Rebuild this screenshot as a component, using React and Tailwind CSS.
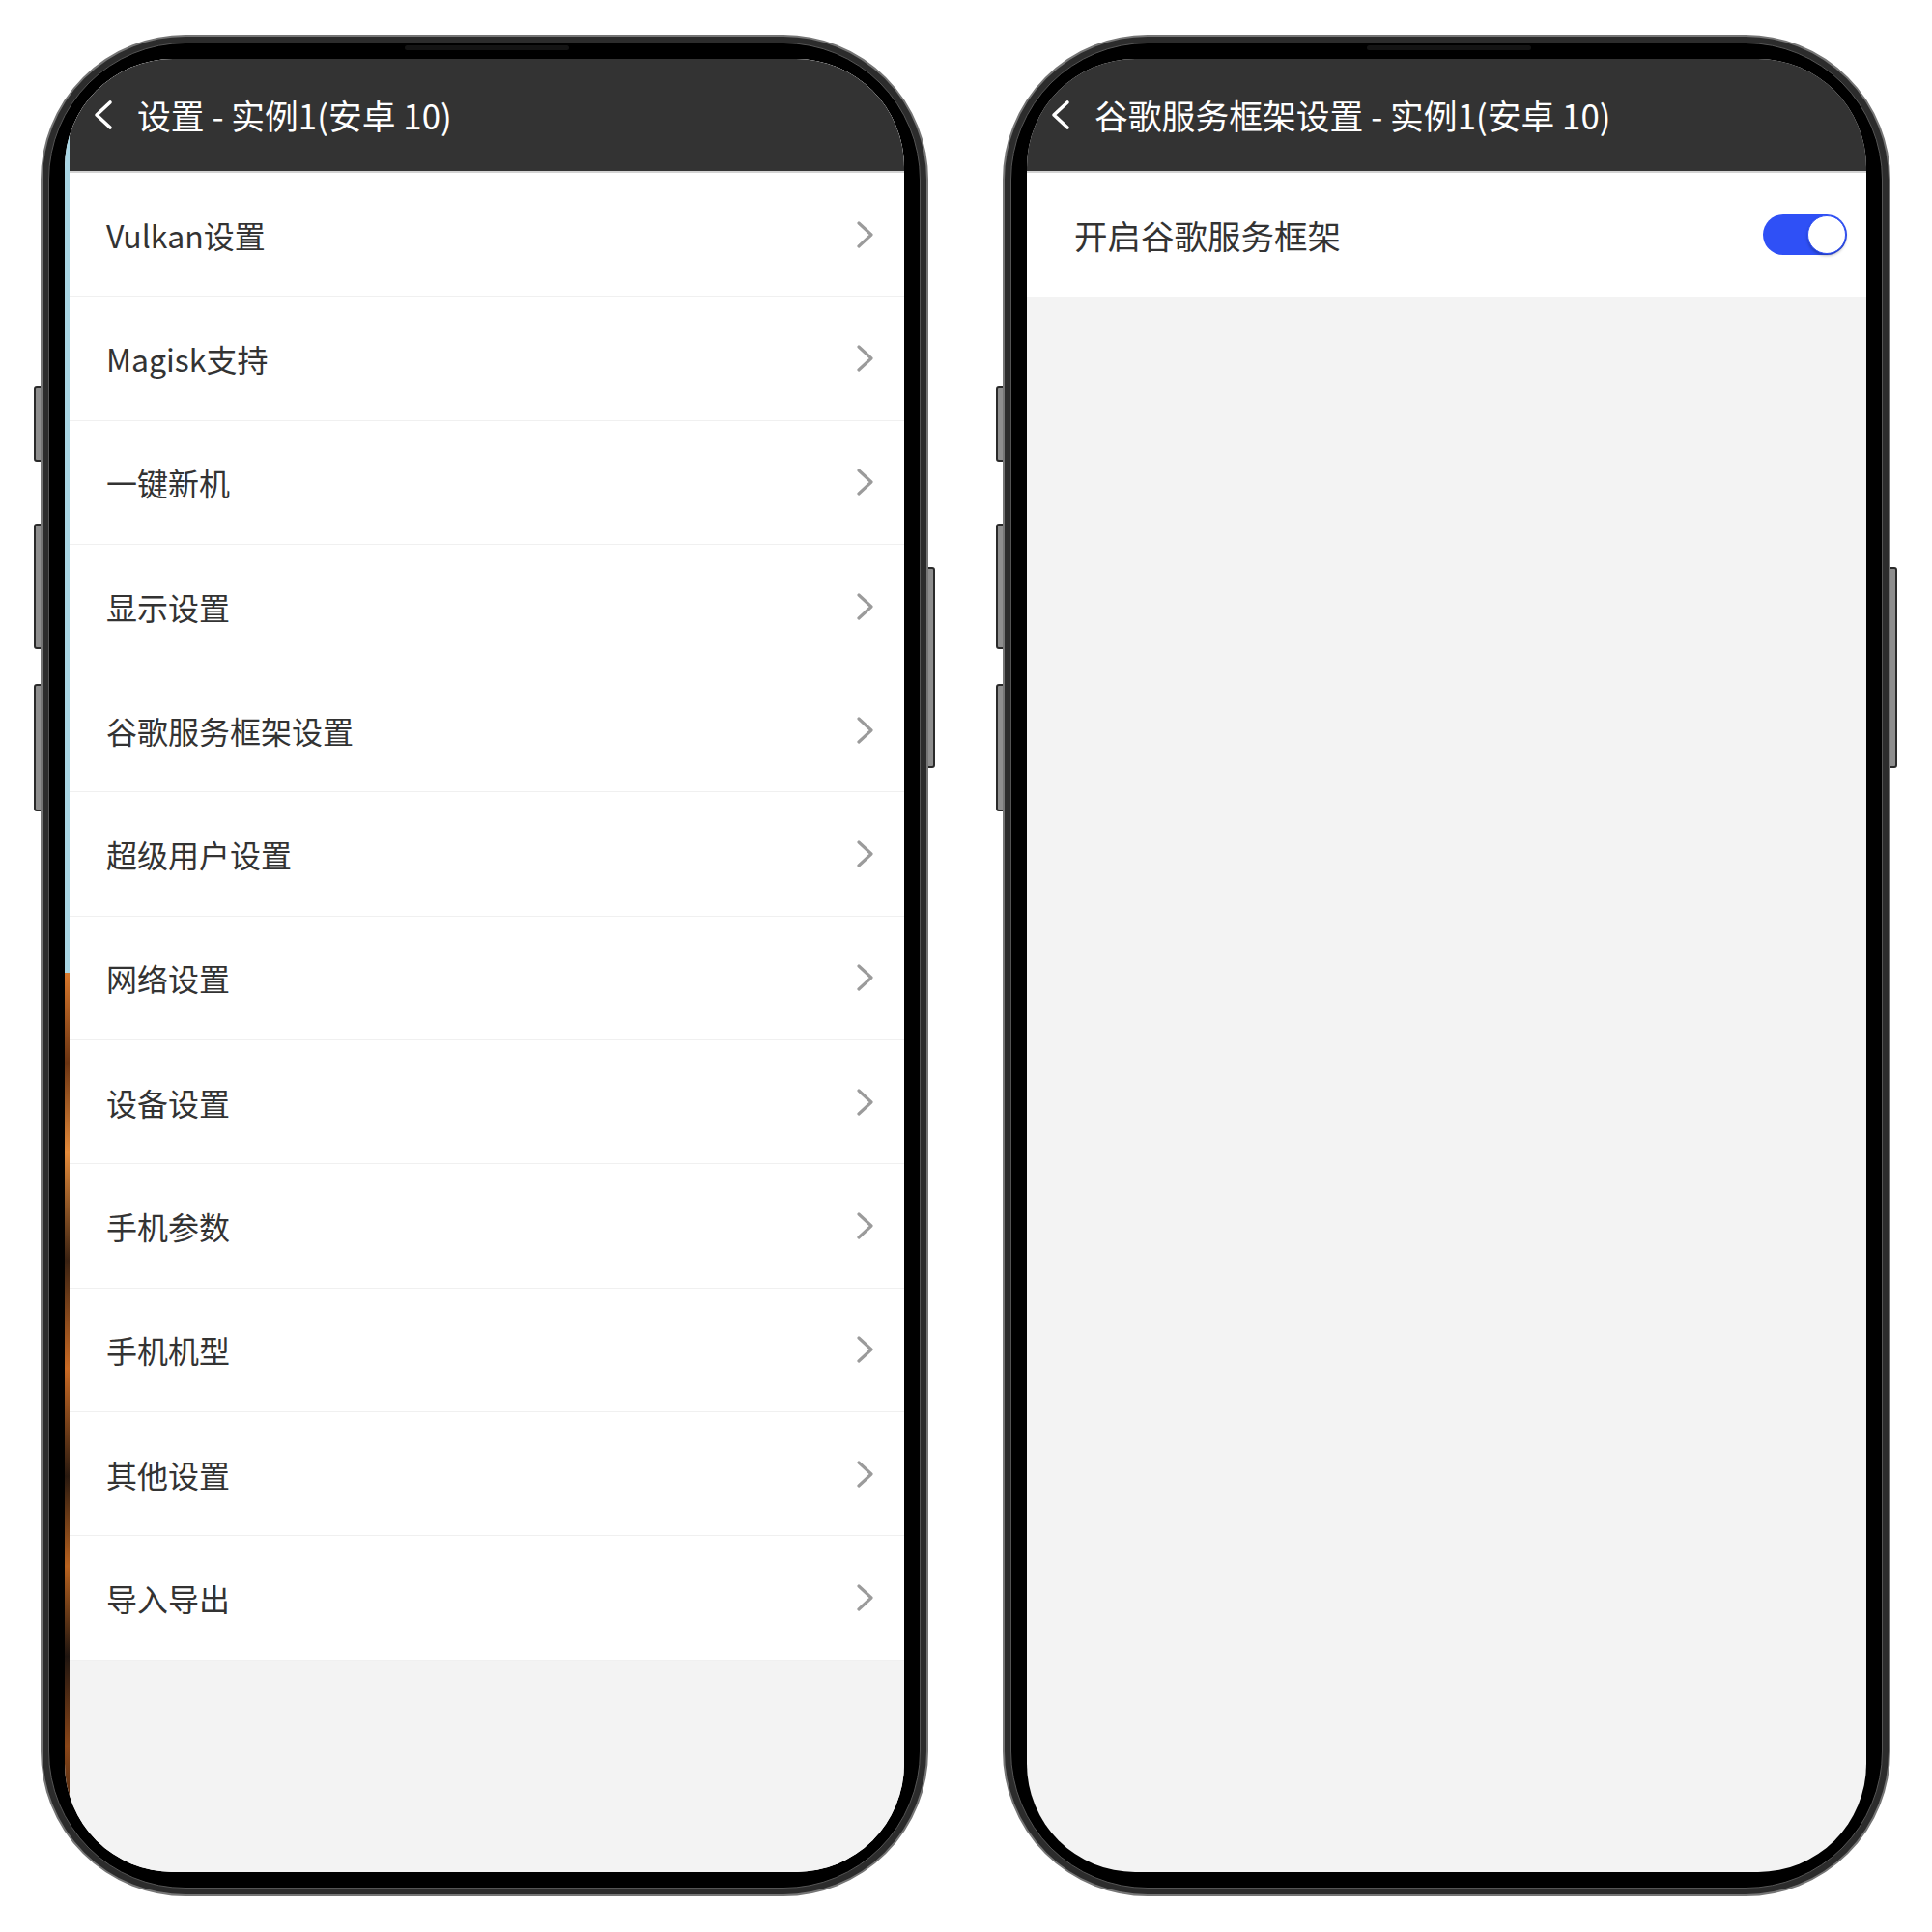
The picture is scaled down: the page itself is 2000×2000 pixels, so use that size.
import React from "react";

const items = [
  "Vulkan设置",
  "Magisk支持",
  "一键新机",
  "显示设置",
  "谷歌服务框架设置",
  "超级用户设置",
  "网络设置",
  "设备设置",
  "手机参数",
  "手机机型",
  "其他设置",
  "导入导出",
];

const BackIcon = () => (
  <svg width="22" height="32" viewBox="0 0 22 32" fill="none">
    <polyline points="18,3 4,16 18,29" stroke="#ffffff" strokeWidth="3.6" strokeLinecap="round" strokeLinejoin="round" />
  </svg>
);

const ChevronRight = () => (
  <svg width="19" height="28" viewBox="0 0 19 28" fill="none">
    <polyline points="3,2 16,14 3,26" stroke="#9b9b9b" strokeWidth="3.2" strokeLinecap="round" strokeLinejoin="round" />
  </svg>
);

const Header = ({ title }) => (
  <>
    <div className="h-[116px] shrink-0 bg-[#333333] flex items-center pl-[24px]">
      <BackIcon />
      <span className="ml-[24px] text-white text-[34.8px] leading-none">{title}</span>
    </div>
    <div className="h-[2px] shrink-0 bg-[#d3d3d3]" />
  </>
);

const Phone = ({ children }) => (
  <div className="relative w-[919px] h-[1927px] shrink-0">
    {/* side keys */}
    <div className="absolute left-[-7px] top-[364px] w-[10px] h-[78px] rounded-[3px] border-2 border-[#2a2a2a] bg-[#8e8e8e]" />
    <div className="absolute left-[-7px] top-[506px] w-[10px] h-[130px] rounded-[3px] border-2 border-[#2a2a2a] bg-[#8e8e8e]" />
    <div className="absolute left-[-7px] top-[672px] w-[10px] h-[132px] rounded-[3px] border-2 border-[#2a2a2a] bg-[#8e8e8e]" />
    <div className="absolute right-[-7px] top-[551px] w-[10px] h-[208px] rounded-[3px] border-2 border-[#2a2a2a] bg-[#8e8e8e]" />

    <div className="relative h-full rounded-[150px] border-2 border-[#757575] bg-[#2c2c2c] p-[6px]">
      <div className="absolute left-[375px] top-[9px] w-[170px] h-[5px] rounded-full bg-[#141414]" />
      <div className="h-full rounded-[142px] border border-[#555555] bg-black p-[16px]">
        <div className="h-full rounded-[112px] overflow-hidden bg-white">{children}</div>
      </div>
    </div>
  </div>
);

export default function App() {
  return (
    <div className="w-[2000px] h-[2000px] bg-white flex items-start pl-[42px] pt-[36px] gap-[77px] font-['Noto_Sans_CJK_SC','Noto_Sans',sans-serif]">
      <Phone>
        <div className="flex h-full">
          <div className="w-[5px] shrink-0 flex flex-col">
            <div className="h-[946px] bg-[#a9d5e3]" />
            <div className="flex-1 bg-[linear-gradient(180deg,#d8782c_0%,#6b3412_10%,#e38a3a_20%,#3a2212_32%,#c96a24_44%,#2a1a10_56%,#b8621f_66%,#1f1510_76%,#8a4618_86%,#111111_100%)]" />
          </div>
          <div className="flex-1 flex flex-col bg-[#f3f3f3]">
            <Header title="设置 - 实例1(安卓 10)" />
            {items.map((name) => (
              <div
                key={name}
                className="h-[128.3px] shrink-0 bg-white border-b border-[#f0f0f0] flex items-center justify-between pl-[38px] pr-[31px]"
              >
                <span className="text-[32px] leading-none text-[#333333]">{name}</span>
                <ChevronRight />
              </div>
            ))}
          </div>
        </div>
      </Phone>

      <Phone>
        <div className="flex flex-col h-full bg-[#f3f3f3]">
          <Header title="谷歌服务框架设置 - 实例1(安卓 10)" />
          <div className="h-[128px] shrink-0 bg-white flex items-center justify-between pl-[49px] pr-[20px]">
            <span className="text-[34.5px] leading-none text-[#333333]">开启谷歌服务框架</span>
            <div className="w-[87px] h-[42px] rounded-full bg-[#2f50f6] flex items-center justify-end pr-[1px]">
              <div className="w-[40px] h-[40px] rounded-full bg-white border border-[#2f50f6] shadow-[0_2px_3px_rgba(0,0,0,0.25)]" />
            </div>
          </div>
        </div>
      </Phone>
    </div>
  );
}
